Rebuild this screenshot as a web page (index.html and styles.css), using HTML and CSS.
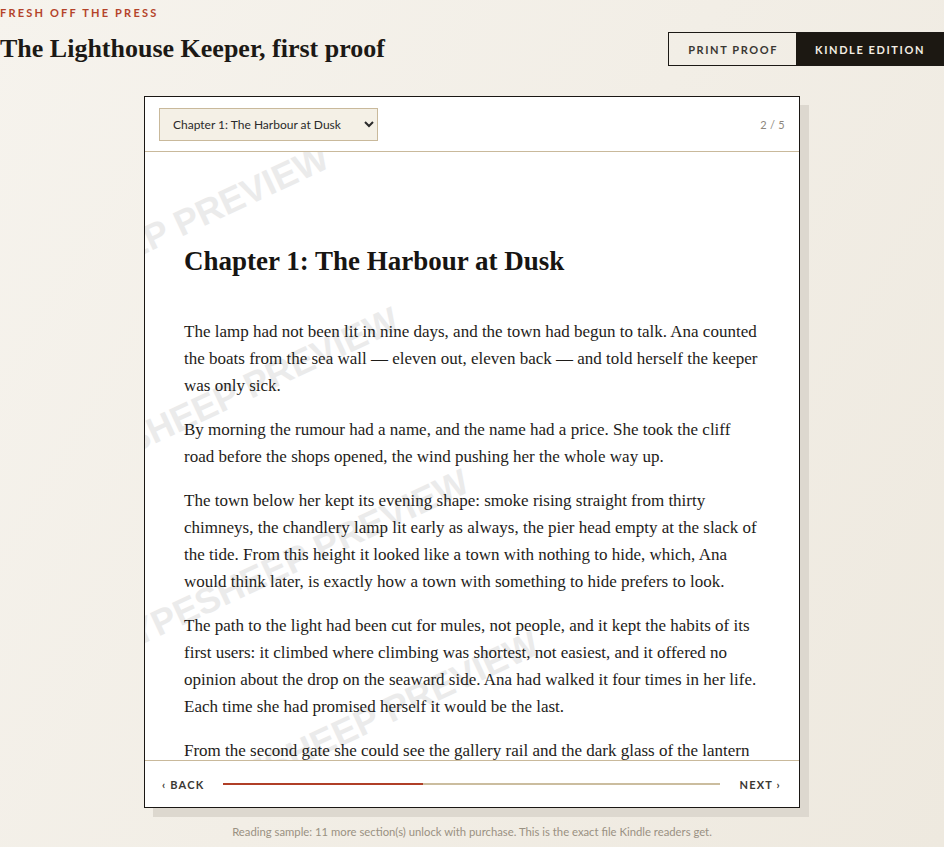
FILE: index.html
```html
<!DOCTYPE html>
<html lang="en">
<head>
<meta charset="utf-8">
<title>The Lighthouse Keeper, first proof</title>
<link rel="stylesheet" href="styles.css">
</head>
<body>
<header class="top">
  <div class="titles">
    <div class="eyebrow">FRESH OFF THE PRESS</div>
    <h1 class="title">The Lighthouse Keeper, first proof</h1>
  </div>
  <div class="toggle">
    <button class="tab">PRINT PROOF</button>
    <button class="tab active">KINDLE EDITION</button>
  </div>
</header>

<main class="reader">
  <div class="reader-head">
    <select class="chapter">
      <option>Chapter 1: The Harbour at Dusk</option>
      <option>Chapter 2</option>
    </select>
    <span class="count">2 / 5</span>
  </div>
  <div class="page">
    <div class="marks" aria-hidden="true">
      <span class="mark m1">TYPESHEEP PREVIEW</span>
      <span class="mark m2">TYPESHEEP PREVIEW</span>
      <span class="mark m3">TYPESHEEP PREVIEW</span>
      <span class="mark m4">TYPESHEEP PREVIEW</span>
    </div>
    <article class="text">
      <h2>Chapter 1: The Harbour at Dusk</h2>
      <p>The lamp had not been lit in nine days, and the town had begun to talk. Ana counted the boats from the sea wall — eleven out, eleven back — and told herself the keeper was only sick.</p>
      <p>By morning the rumour had a name, and the name had a price. She took the cliff road before the shops opened, the wind pushing her the whole way up.</p>
      <p>The town below her kept its evening shape: smoke rising straight from thirty chimneys, the chandlery lamp lit early as always, the pier head empty at the slack of the tide. From this height it looked like a town with nothing to hide, which, Ana would think later, is exactly how a town with something to hide prefers to look.</p>
      <p>The path to the light had been cut for mules, not people, and it kept the habits of its first users: it climbed where climbing was shortest, not easiest, and it offered no opinion about the drop on the seaward side. Ana had walked it four times in her life. Each time she had promised herself it would be the last.</p>
      <p>From the second gate she could see the gallery rail and the dark glass of the lantern room, and below it the keeper's door, shut and bolted from the inside.</p>
    </article>
  </div>
  <div class="reader-foot">
    <span class="nav">‹ BACK</span>
    <div class="progress"><div class="fill" style="width:40.2%"></div></div>
    <span class="nav">NEXT ›</span>
  </div>
</main>

<p class="note">Reading sample: 11 more section(s) unlock with purchase. This is the exact file Kindle readers get.</p>
</body>
</html>
```

FILE: styles.css
```css
html, body {
  margin: 0;
  padding: 0;
}
body {
  min-height: 847px;
  background: linear-gradient(120deg, #f6f3ed 0%, #f2eee6 50%, #eee9df 100%);
  font-family: "Lato", "Liberation Sans", sans-serif;
  color: #1c1915;
}
.top {
  display: flex;
  justify-content: space-between;
  align-items: flex-end;
  padding-top: 6px;
}
.eyebrow {
  font-size: 11px;
  font-weight: 700;
  letter-spacing: 2.2px;
  color: #b4432a;
  line-height: 14px;
}
.title {
  margin: 12px 0 0 0;
  font-family: "Liberation Serif", serif;
  font-weight: 700;
  font-size: 26px;
  line-height: 34px;
  color: #1c1915;
}
.toggle {
  display: flex;
  border: 1px solid #1c1915;
}
.tab {
  border: 0;
  margin: 0;
  background: transparent;
  font-family: "Lato", "Liberation Sans", sans-serif;
  font-size: 11px;
  font-weight: 700;
  letter-spacing: 1.6px;
  color: #3a3733;
  height: 32px;
  padding: 0 18px 0 19px;
}
.tab.active {
  background: #1c1812;
  color: #f3eee4;
  padding: 0 18px 0 19px;
}
.reader {
  width: 656px;
  box-sizing: border-box;
  margin: 30px auto 0;
  border: 1px solid #1a1714;
  background: #fff;
  box-shadow: 9px 9px 0 #ddd8cf;
  display: flex;
  flex-direction: column;
}
.reader-head {
  height: 55px;
  box-sizing: border-box;
  padding: 0 14px;
  display: flex;
  align-items: center;
  justify-content: space-between;
  border-bottom: 1px solid #c9b99b;
}
.chapter {
  width: 219px;
  height: 33px;
  padding: 0 8px 0 9px;
  background-color: #f4f0e6;
  border: 1px solid #c9b99b;
  border-radius: 0;
  font-family: "Lato", "Liberation Sans", sans-serif;
  font-size: 12px;
  color: #2a2a2a;
}
.count {
  font-size: 11px;
  letter-spacing: 0.3px;
  color: #8d877d;
}
.page {
  position: relative;
  height: 608px;
  overflow: hidden;
}
.marks {
  position: absolute;
  inset: 0;
  z-index: 0;
}
.mark {
  position: absolute;
  white-space: nowrap;
  font-family: "Liberation Sans", sans-serif;
  font-weight: 700;
  font-size: 36px;
  line-height: 36px;
  color: #ebebeb;
  transform: rotate(-25deg);
  transform-origin: 0 0;
}
.m1 { left: -181px; top: 153px; }
.m2 { left: -111px; top: 315px; }
.m3 { left: -41px; top: 477px; }
.m4 { left: 29px; top: 639px; }
.text {
  position: relative;
  z-index: 1;
  padding: 92px 40px 0 39px;
  font-family: "Liberation Serif", serif;
  color: #1e1c19;
}
.text h2 {
  margin: 0 0 40px;
  font-size: 27px;
  line-height: 34px;
  font-weight: 700;
  color: #171512;
}
.text p {
  margin: 0 0 17px;
  font-size: 17px;
  line-height: 27px;
}
.reader-foot {
  height: 46px;
  border-top: 1px solid #c9b99b;
  display: flex;
  align-items: center;
  gap: 19px;
  padding: 0 18px 0 17px;
}
.nav {
  font-size: 11px;
  font-weight: 700;
  letter-spacing: 1.2px;
  color: #3a3733;
  white-space: nowrap;
}
.progress {
  flex: 1;
  height: 2px;
  background: #cbbd9f;
}
.fill {
  height: 100%;
  background: #b03f27;
}
.note {
  margin: 17px 0 0;
  text-align: center;
  font-size: 11.3px;
  color: #9a9182;
}
```
